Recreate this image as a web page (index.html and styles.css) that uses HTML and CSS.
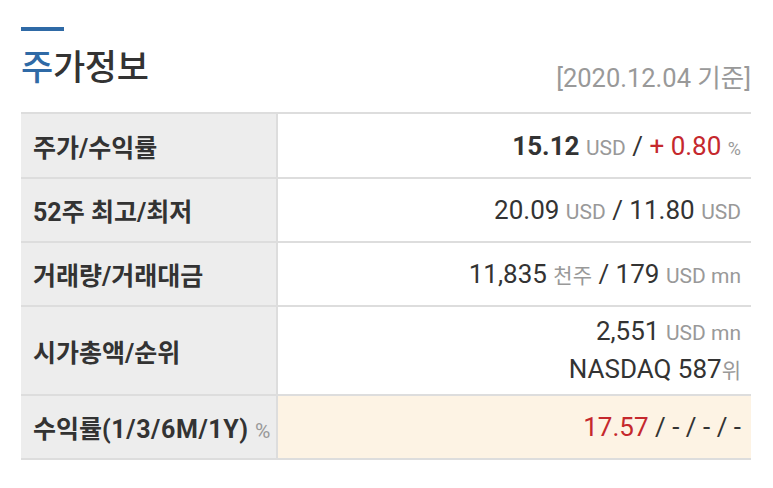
FILE: index.html
```html
<!DOCTYPE html>
<html lang="ko">
<head>
<meta charset="utf-8">
<link rel="stylesheet" href="styles.css">
</head>
<body>
<div class="wrap">
  <div class="bar"></div>
  <div class="head">
    <h2 class="title"><span class="accent">주</span>가정보</h2>
    <div class="date">[2020.12.04 기준]</div>
  </div>
  <table class="info">
    <tr class="r1">
      <th>주가/수익률</th>
      <td><b class="big">15.12</b> <span class="u">USD</span> / <span class="red">+ 0.80</span> <span class="u sm">%</span></td>
    </tr>
    <tr class="r2">
      <th>52주 최고/최저</th>
      <td>20.09 <span class="u">USD</span> / 11.80 <span class="u">USD</span></td>
    </tr>
    <tr class="r3">
      <th>거래량/거래대금</th>
      <td>11,835 <span class="u">천주</span> / 179 <span class="u">USD mn</span></td>
    </tr>
    <tr class="r4">
      <th>시가총액/순위</th>
      <td><div class="line">2,551 <span class="u">USD mn</span></div><div class="line">NASDAQ 587<span class="u">위</span></div></td>
    </tr>
    <tr class="r5">
      <th>수익률<span class="wide">(1/3/6M/1Y)</span> <span class="u pct norm">%</span></th>
      <td class="hl"><span class="red">17.57</span> / - / - / -</td>
    </tr>
  </table>
</div>
</body>
</html>
```
FILE: styles.css
```css
html, body { margin: 0; padding: 0; background: #fff; }
body { font-family: Roboto, "Noto Sans CJK KR", sans-serif; color: #333; }
.wrap { padding: 27px 22px 0 21px; }
.bar { width: 43px; height: 4px; background: #2f6aa6; }
.head { display: flex; justify-content: space-between; align-items: flex-end; margin-top: 13px; height: 68px; }
.title { margin: 0; font-size: 35px; font-weight: 500; line-height: 42px; color: #333; letter-spacing: -0.3px; font-family: "Noto Sans CJK KR", sans-serif; align-self: flex-start; }
.accent { color: #2f6aa6; }
.date { font-size: 25.5px; color: #999; padding-bottom: 20px; line-height: 28px; }
.info { width: 730px; border-collapse: collapse; border-top: 2px solid #ddd; }
.info tr { border-bottom: 2px solid #ddd; }
.info th { width: 243px; background: #ededed; text-align: left; font-weight: 700; font-size: 25px; padding: 0 0 0 12px; border-right: 2px solid #ddd; color: #333; white-space: nowrap; }
.info td { text-align: right; font-size: 26px; padding: 0 10px 0 0; color: #333; }
.r1 { height: 65px; }
.r2, .r3, .r5 { height: 64px; }
.r4 { height: 89px; }
.line { line-height: 36px; }
.big { font-weight: 700; }
.u { color: #999; font-size: 21px; }
.sm { font-size: 18px; }
.pct { font-size: 21px; }
.wide { letter-spacing: 0.6px; }
.norm { font-weight: 400; }
.red { color: #c5282d; }
.hl { background: #fdf3e4; }
```
